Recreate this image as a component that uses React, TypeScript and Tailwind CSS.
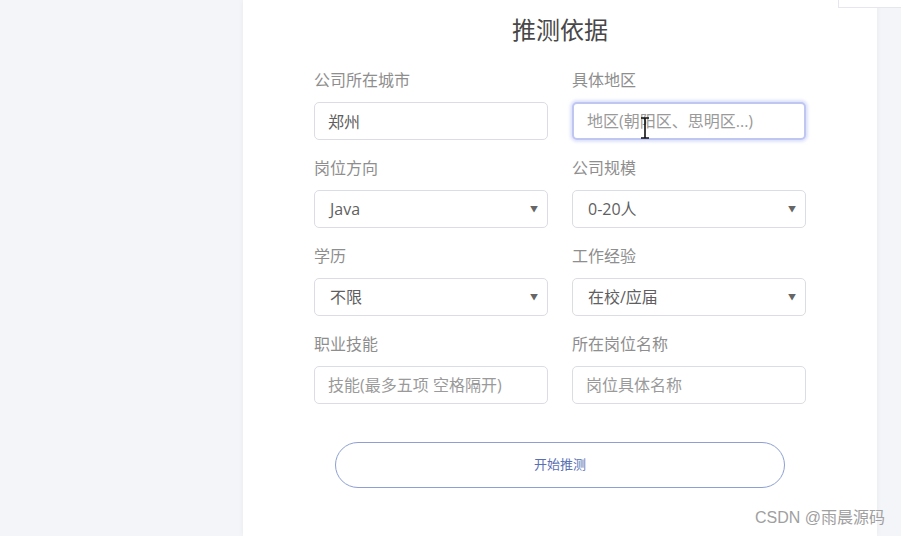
import { ReactNode } from 'react';

const font = 'font-["Open_Sans","Noto_Sans_CJK_SC",sans-serif]';

const Field = ({ label, children }: { label: string; children: ReactNode }) => (
  <div className="flex flex-col">
    <label className="h-[22px] text-[16px] leading-[22px] text-[#8e8e8e] mb-[11px]">{label}</label>
    {children}
  </div>
);

const TextInput = ({ value, placeholder, focused }: { value?: string; placeholder?: string; focused?: boolean }) => (
  <input
    defaultValue={value}
    placeholder={placeholder}
    className={`h-[38px] w-full rounded-[5px] bg-white px-[13px] text-[16px] text-[#5f5f5f] outline-none placeholder:text-[#9a9a9a] ${
      focused
        ? 'border-2 border-[#bfc6f2] shadow-[0_0_3px_2px_rgba(200,206,245,0.6)] px-[12px]'
        : 'border border-[#dcdde3]'
    }`}
  />
);

const Select = ({ value }: { value: string }) => (
  <div className="flex h-[38px] items-center justify-between rounded-[5px] border border-[#dcdde3] bg-white pl-[15px] pr-[9px] text-[16px] text-[#5f5f5f]">
    <span>{value}</span>
    <span className="text-[8px] text-[#666]">▼</span>
  </div>
);

export default function App() {
  return (
    <div className={`relative flex h-[536px] w-full overflow-hidden bg-[#f4f5f9] ${font}`}>
      <div className="w-[243px] shrink-0" />

      {/* 卡片 */}
      <div className="relative flex w-[634px] shrink-0 flex-col bg-white px-[71px] pt-[14px] shadow-[0_0_6px_rgba(0,0,0,0.05)]">
        <h2 className="h-[32px] text-center text-[24px] leading-[32px] text-[#484848]">推测依据</h2>

        <div className="mt-[23px] grid grid-cols-2 gap-x-6 gap-y-[17px]">
          <Field label="公司所在城市">
            <TextInput value="郑州" />
          </Field>
          <Field label="具体地区">
            <TextInput placeholder="地区(朝阳区、思明区...)" focused />
          </Field>
          <Field label="岗位方向">
            <Select value="Java" />
          </Field>
          <Field label="公司规模">
            <Select value="0-20人" />
          </Field>
          <Field label="学历">
            <Select value="不限" />
          </Field>
          <Field label="工作经验">
            <Select value="在校/应届" />
          </Field>
          <Field label="职业技能">
            <TextInput placeholder="技能(最多五项 空格隔开)" />
          </Field>
          <Field label="所在岗位名称">
            <TextInput placeholder="岗位具体名称" />
          </Field>
        </div>

        <button className="mx-[21px] mt-[38px] h-[46px] rounded-full border border-[#8ea0d2] bg-white text-[13px] text-[#5a6fb4]">
          开始推测
        </button>

        {/* 鼠标 I 形光标 */}
        <svg className="absolute left-[397px] top-[117px]" width="10" height="22" viewBox="0 0 10 22">
          <path d="M1 1h8M5 1v20M1 21h8" stroke="#111" strokeWidth="1.6" fill="none" />
        </svg>
      </div>

      <div className="absolute right-0 top-0 h-[8px] w-[63px] border-b border-l border-[#e6e7ec] bg-white" />

      <div className="absolute right-[16px] bottom-[6px] font-['Liberation_Sans','Noto_Sans_CJK_SC',sans-serif] text-[16px] text-[#a0a0a0]">
        CSDN @雨晨源码
      </div>
    </div>
  );
}
